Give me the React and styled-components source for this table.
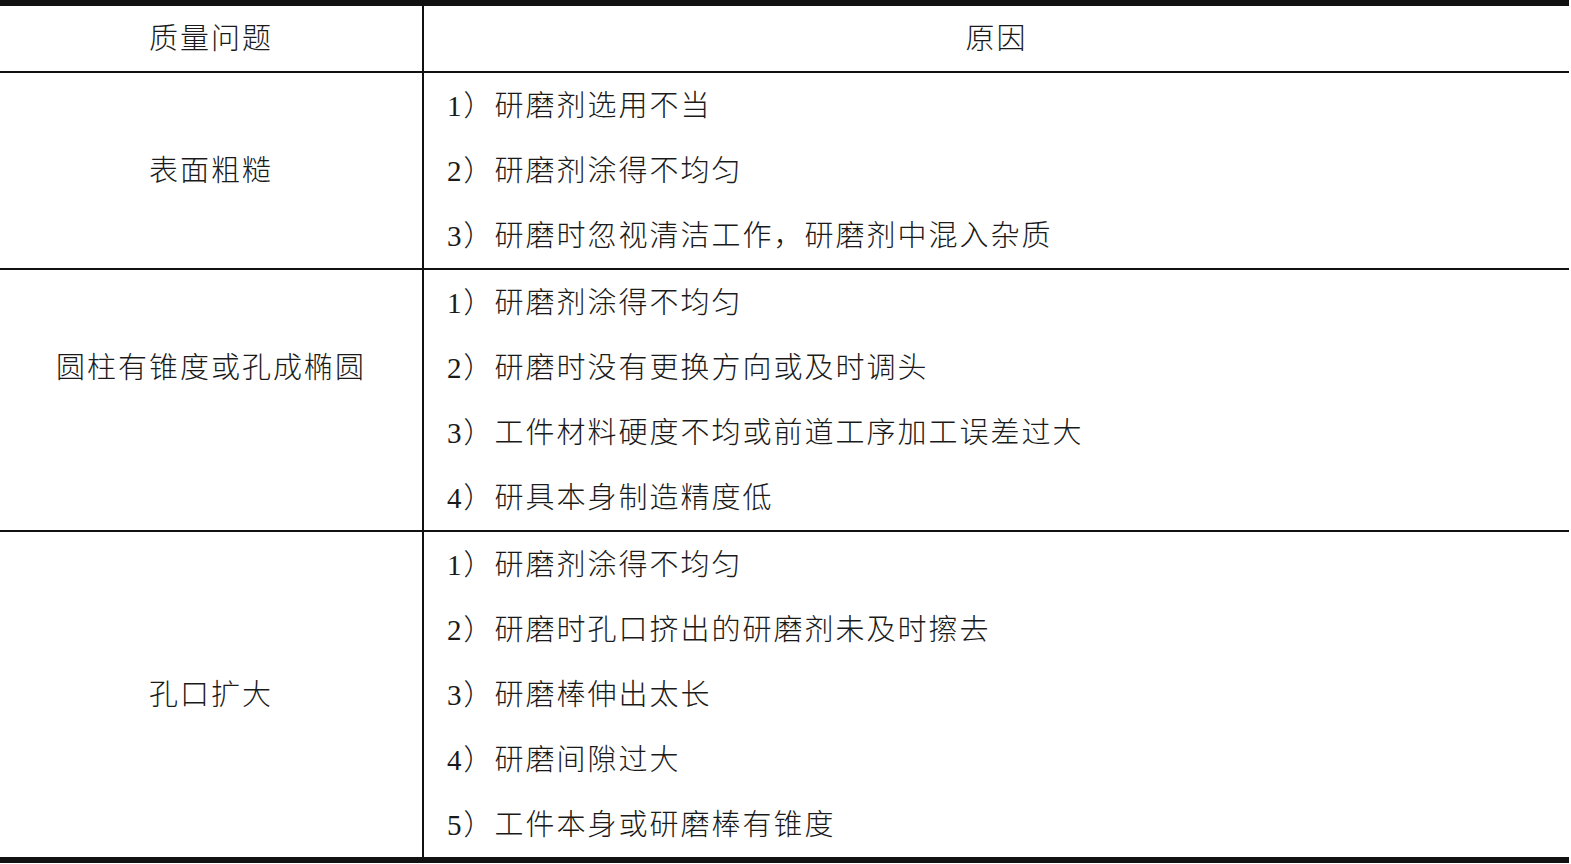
import React from 'react';
import styled, { createGlobalStyle } from 'styled-components';

const GlobalStyle = createGlobalStyle`
  html, body {
    margin: 0;
    padding: 0;
    background: #ffffff;
  }
  body {
    font-family: "Liberation Serif", "Noto Sans CJK SC", serif;
    color: #1a1a1a;
  }
`;

const Table = styled.div`
  width: 1569px;
  border-top: 6px solid #111;
  border-bottom: 6px solid #111;
`;

const Row = styled.div`
  display: flex;
  border-bottom: ${(p) => (p.last ? 'none' : '2px solid #111')};
`;

// the issue text sits on one of the cause lines (offset = lines pushed up from centre)
const IssueCell = styled.div`
  width: 422px;
  flex: none;
  border-right: 2px solid #111;
  display: flex;
  align-items: center;
  justify-content: center;
  padding-bottom: ${(p) => (p.offset || 0) * 65}px;
  box-sizing: border-box;
  width: 424px;
`;

const CauseCell = styled.div`
  flex: 1;
  display: flex;
  flex-direction: column;
  padding-left: ${(p) => (p.center ? '0' : '23px')};
  align-items: ${(p) => (p.center ? 'center' : 'flex-start')};
`;

const Text = styled.span`
  font-size: 29px;
  font-weight: 300;
  letter-spacing: 2px;
  height: 65px;
  line-height: 67px;
  white-space: nowrap;
`;

const rows = [
  {
    issue: '表面粗糙',
    causes: ['研磨剂选用不当', '研磨剂涂得不均匀', '研磨时忽视清洁工作，研磨剂中混入杂质'],
  },
  {
    issue: '圆柱有锥度或孔成椭圆',
    offset: 1,
    causes: [
      '研磨剂涂得不均匀',
      '研磨时没有更换方向或及时调头',
      '工件材料硬度不均或前道工序加工误差过大',
      '研具本身制造精度低',
    ],
  },
  {
    issue: '孔口扩大',
    causes: [
      '研磨剂涂得不均匀',
      '研磨时孔口挤出的研磨剂未及时擦去',
      '研磨棒伸出太长',
      '研磨间隙过大',
      '工件本身或研磨棒有锥度',
    ],
  },
];

const App = () => {
  return (
    <>
      <GlobalStyle />
      <Table>
        <Row>
          <IssueCell>
            <Text>质量问题</Text>
          </IssueCell>
          <CauseCell center>
            <Text>原因</Text>
          </CauseCell>
        </Row>
        {rows.map((row, i) => (
          <Row key={row.issue} last={i === rows.length - 1}>
            <IssueCell offset={row.offset}>
              <Text>{row.issue}</Text>
            </IssueCell>
            <CauseCell>
              {row.causes.map((c, j) => (
                <Text key={c}>
                  {j + 1}）{c}
                </Text>
              ))}
            </CauseCell>
          </Row>
        ))}
      </Table>
    </>
  );
};

export default App;
